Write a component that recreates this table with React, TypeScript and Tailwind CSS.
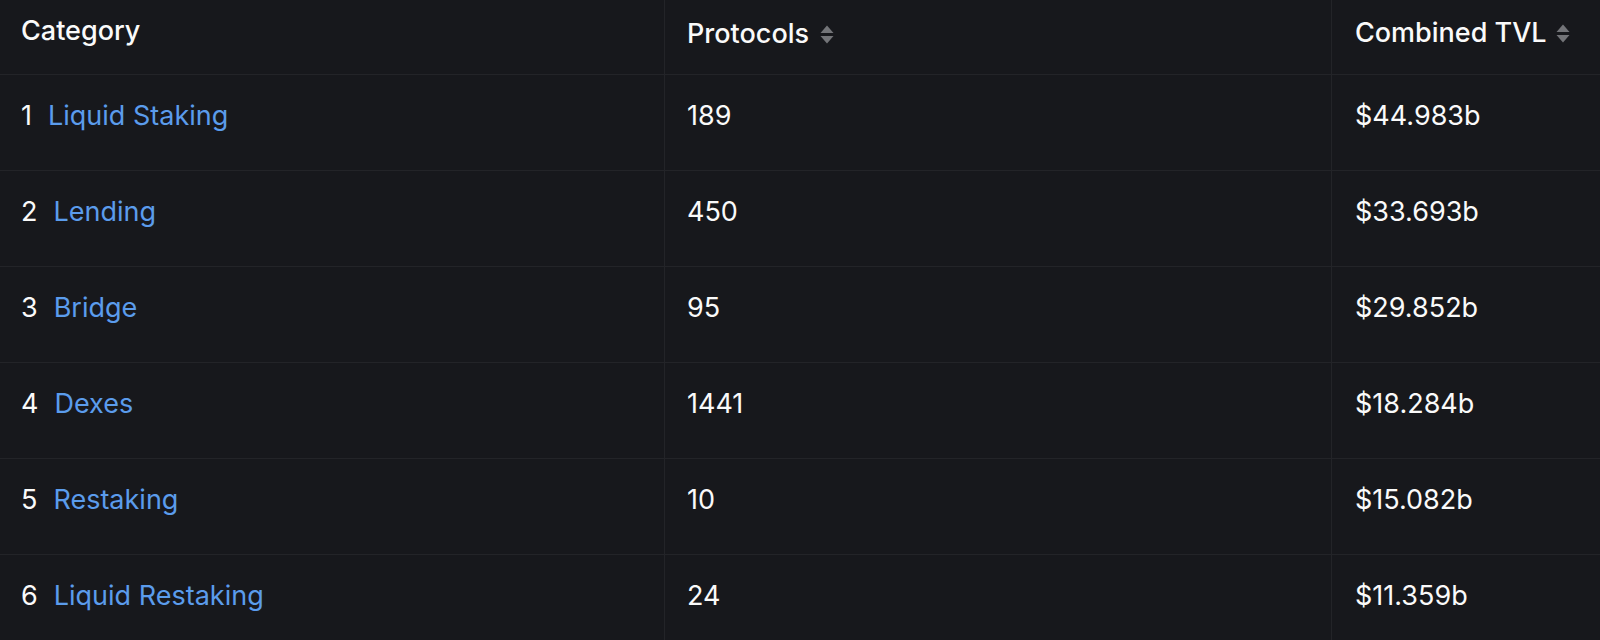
import React from "react";

type Row = { name: string; protocols: number; tvl: string };

const rows: Row[] = [
  { name: "Liquid Staking", protocols: 189, tvl: "$44.983b" },
  { name: "Lending", protocols: 450, tvl: "$33.693b" },
  { name: "Bridge", protocols: 95, tvl: "$29.852b" },
  { name: "Dexes", protocols: 1441, tvl: "$18.284b" },
  { name: "Restaking", protocols: 10, tvl: "$15.082b" },
  { name: "Liquid Restaking", protocols: 24, tvl: "$11.359b" },
];

const SortIcon = () => (
  <svg width="14" height="19" viewBox="0 0 14 19" className="shrink-0" fill="#737478">
    <path d="M7 0.5 L13.5 8 L0.5 8 Z" />
    <path d="M0.5 11 L13.5 11 L7 18.5 Z" />
  </svg>
);

export default function App() {
  return (
    <div
      className="w-full h-[640px] overflow-hidden bg-[#17181c] text-[#fafafa]"
      style={{ fontFamily: "Inter, 'Noto Sans', sans-serif" }}
    >
      <div className="grid grid-cols-[665px_667px_1fr] text-[27px] leading-[36px]">
        {/* header */}
        <div className="h-[75px] border-b border-r border-[#232428] pl-[21px] pt-[13px] font-medium">
          Category
        </div>
        <div className="h-[75px] border-b border-r border-[#232428] pl-[22px] pt-[16px] font-medium flex items-start gap-[11px]">
          <span>Protocols</span>
          <span className="mt-[9px]">
            <SortIcon />
          </span>
        </div>
        <div className="h-[75px] border-b border-[#232428] pl-[23px] pt-[15px] font-medium flex items-start gap-[9px]">
          <span>Combined TVL</span>
          <span className="mt-[9px]">
            <SortIcon />
          </span>
        </div>

        {/* rows */}
        {rows.map((r, i) => (
          <React.Fragment key={r.name}>
            <div className="h-[96px] border-b border-r border-[#232428] pl-[21px] pt-[23px] flex items-start gap-[16px]">
              <span>{i + 1}</span>
              <a className="text-[#5b9cec] cursor-pointer">{r.name}</a>
            </div>
            <div className="h-[96px] border-b border-r border-[#232428] pl-[22px] pt-[23px]">
              {r.protocols}
            </div>
            <div className="h-[96px] border-b border-[#232428] pl-[23px] pt-[23px]">
              {r.tvl}
            </div>
          </React.Fragment>
        ))}
      </div>
    </div>
  );
}
